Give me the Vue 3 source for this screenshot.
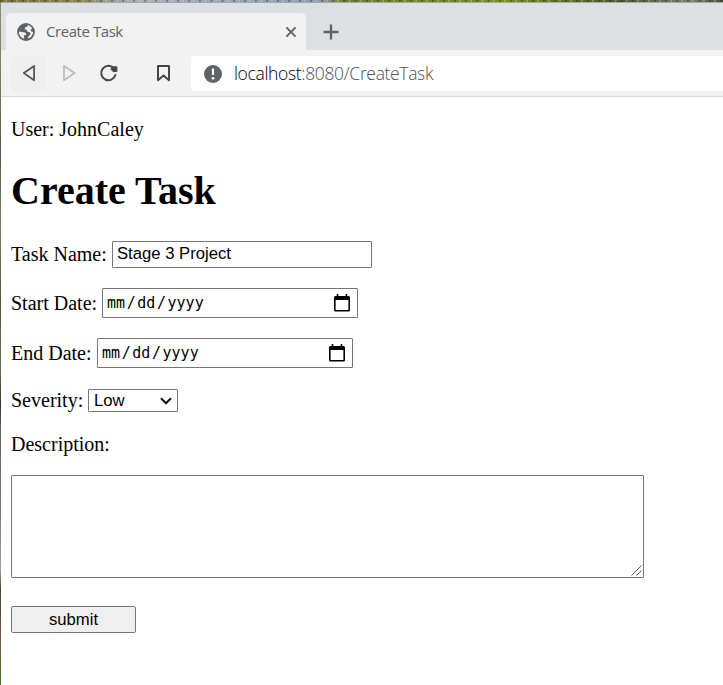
<script setup>
import { ref } from 'vue'

const taskName = ref('Stage 3 Project')
const dates = [
  { label: 'Start Date:', cls: 'start' },
  { label: 'End Date:', cls: 'end' },
]
</script>

<template>
  <div class="desktop">
    <div class="window">
      <div class="tabs">
        <div class="tab">
          <svg class="globe" width="18" height="18" viewBox="0 0 18 18">
            <circle cx="9" cy="9" r="8.9" fill="#5f6368" />
            <path d="M2 8.5 L6.5 9.2 C8.5 9.5 9.2 10.3 9.2 11.8 L7.2 12.3 L7 15.8 C3.8 14.8 1.7 12 2 8.5Z" fill="#f2f2f2" />
            <path d="M10.6 2.1 L10.4 3.8 L8 4.3 L7.8 6.2 L9.8 7 L10.4 8.8 L13 9.3 L13.6 11.2 L11.6 13.2 L10.5 15.7 C13.6 15 16 12.3 16 9 L14.4 8.6 L13.4 6.8 L15.2 5.8 C14.2 3.8 12.6 2.5 10.6 2.1Z" fill="#f2f2f2" />
          </svg>
          <span class="tab-title">Create Task</span>
          <svg class="close" width="12" height="12" viewBox="0 0 12 12">
            <path d="M1.4 1.4 10.6 10.6M10.6 1.4 1.4 10.6" stroke="#5f6368" stroke-width="2" />
          </svg>
        </div>
        <svg class="plus" width="16" height="16" viewBox="0 0 16 16">
          <path d="M8 .5V15.5M.5 8H15.5" stroke="#5f6368" stroke-width="2.3" />
        </svg>
      </div>
      <div class="toolbar">
        <div class="tool back">
          <svg width="35" height="35" viewBox="0 0 35 35" fill="none" stroke="#55585c" stroke-width="1.8" stroke-linejoin="round">
            <path d="M23.1 10V24.2L12.8 17.1Z" />
          </svg>
        </div>
        <div class="tool forward">
          <svg width="35" height="35" viewBox="0 0 35 35" fill="none" stroke="#bcbdbe" stroke-width="1.8" stroke-linejoin="round">
            <path d="M13 10V24.2L23.6 17.1Z" />
          </svg>
        </div>
        <div class="tool reload">
          <svg width="35" height="35" viewBox="0 0 35 35" fill="none">
            <path d="M22.8 12.2A7.2 7.2 0 1 0 24.4 19" stroke="#444648" stroke-width="2" stroke-linecap="round" />
            <path d="M21.2 10.9 25.9 10.8V15.4L22.3 15.7 19.9 13.2Z" fill="#444648" stroke="#444648" stroke-linejoin="round" />
          </svg>
        </div>
        <div class="tool bookmark">
          <svg width="35" height="35" viewBox="0 0 35 35" fill="none" stroke="#444648" stroke-width="2" stroke-linejoin="round">
            <path d="M12 10H23V24.2L17.5 19.6 12 24.2Z" />
          </svg>
        </div>
        <div class="address">
          <svg width="18" height="18" viewBox="0 0 18 18">
            <circle cx="9" cy="9" r="9" fill="#5f6368" />
            <path d="M9 3.5V10" stroke="#fff" stroke-width="2.2" />
            <circle cx="9" cy="13.3" r="1.4" fill="#fff" />
          </svg>
          <span class="url"><b>localhost</b>:8080/CreateTask</span>
        </div>
      </div>
      <main class="page">
        <p class="user">User: JohnCaley</p>
        <h1>Create Task</h1>
        <form @submit.prevent>
          <div class="row name">
            <label for="task">Task Name:</label>
            <input id="task" v-model="taskName" type="text" />
          </div>
          <div v-for="d in dates" :key="d.cls" class="row date" :class="d.cls">
            <label>{{ d.label }}</label>
            <div class="date-box">
              <span class="mask">mm<i>/</i>dd<i>/</i>yyyy</span>
              <svg width="16" height="18" viewBox="0 0 16 18">
                <path d="M2.7 0H4.3V2H11.7V0H13.3V2H14.5Q16 2 16 3.5V16Q16 17.5 14.5 17.5H1.5Q0 17.5 0 16V3.5Q0 2 1.5 2H2.7ZM1.6 6V16H14.4V6Z" fill="#000" fill-rule="evenodd" />
              </svg>
            </div>
          </div>
          <div class="row severity">
            <label>Severity:</label>
            <div class="select">
              <span>Low</span>
              <svg width="12" height="8" viewBox="0 0 12 8">
                <path d="M1 1.2 6 6.2 11 1.2" fill="none" stroke="#111" stroke-width="2.1" />
              </svg>
            </div>
          </div>
          <div class="row desc"><label for="description">Description:</label></div>
          <div class="area">
            <textarea id="description"></textarea>
            <svg class="grip" width="11" height="11" viewBox="0 0 11 11">
              <path d="M.5 10.5 10.5 .5M5.5 10.5 10.5 5.5" stroke="#555" stroke-width="1" />
            </svg>
          </div>
          <button type="submit">submit</button>
        </form>
      </main>
    </div>
  </div>
</template>

<style>
body {
  margin: 0;
  overflow: hidden;
}
</style>

<style scoped>
* {
  box-sizing: border-box;
}
.desktop {
  width: 723px;
  height: 685px;
  padding: 2px 0 0 1px;
  background:
    repeating-linear-gradient(97deg, rgba(20, 24, 12, 0.3) 0 2px, transparent 2px 5px, rgba(210, 215, 200, 0.3) 5px 7px, transparent 7px 11px) 0 0 / 100% 2px no-repeat,
    linear-gradient(90deg, #75713d 0, #85824f 80px, #9a9c91 105px, #a9b1bc 140px, #929dae 320px, #6d7936 345px, #7b8b23 500px, #4e5531 620px, #777b73 690px, #4b513c) 0 0 / 100% 2px no-repeat,
    linear-gradient(180deg, #908b6d 0, #77785f 90px, #56594a 150px, #7b8165 230px, #55583c 300px, #6d7157 370px, #33352a 405px, #62646b 430px, #777980 510px, #a0a198 570px, #4a4333 590px, #765e4d 645px, #536d2c 665px);
}
.window {
  height: 683px;
  border-top: 1px solid #a5a9ab;
  background: #fff;
}
.tabs {
  display: flex;
  height: 47px;
  padding: 10px 0 0 5px;
  background: #dce0e3;
}
.tab {
  display: flex;
  align-items: center;
  width: 300px;
  height: 37px;
  padding: 0 9px 0 11px;
  border-radius: 5px 5px 0 0;
  background: #f2f2f2;
}
.tab-title {
  flex: 1;
  margin-left: 11px;
  padding-bottom: 2px;
  font: 15px/20px "Open Sans", sans-serif;
  letter-spacing: -0.44px;
  color: #5f6368;
}
.plus {
  margin: 11px 0 0 17px;
}
.toolbar {
  display: flex;
  align-items: flex-start;
  height: 47px;
  padding: 6px 0 0 10px;
  border-bottom: 1px solid #d5d8dc;
  background: #f2f2f2;
}
.tool {
  width: 35px;
  height: 35px;
  border-radius: 4px;
}
.tool svg,
.address svg {
  display: block;
}
.back {
  background: #eeeeee;
}
.forward {
  margin-left: 5px;
}
.reload {
  margin-left: 5px;
}
.bookmark {
  margin-left: 20px;
}
.address {
  display: flex;
  flex: 1;
  align-items: center;
  height: 35px;
  margin-left: 10px;
  padding-left: 13px;
  border-radius: 4px 0 0 4px;
  background: #fff;
}
.url {
  margin-left: 12px;
  padding-bottom: 1px;
  font: 300 17.5px/24px "Open Sans", sans-serif;
  letter-spacing: -0.34px;
  color: #4c5055;
  white-space: nowrap;
}
.url b {
  font-weight: inherit;
  color: #000;
}
.page {
  padding: 21px 0 0 10px;
  font: 20px/23px "Liberation Serif", serif;
  color: #000;
}
.user {
  height: 23px;
  margin: 0;
}
h1 {
  height: 46px;
  margin: 27px 0;
  font: bold 40px/46px "Liberation Serif", serif;
}
.row {
  display: flex;
  align-items: center;
}
.row label {
  flex: none;
  white-space: nowrap;
}
.name label {
  width: 101px;
}
.start label {
  width: 91px;
}
.end label {
  width: 86px;
}
.severity label {
  width: 77px;
}
input,
.date-box,
.select {
  border: 1px solid #767676;
  border-radius: 1px;
  background: #fff;
}
input {
  width: 260px;
  height: 27px;
  padding: 0 4px 2px;
  font: 16.67px "Liberation Sans", sans-serif;
  color: #000;
  outline: none;
}
.date {
  margin-top: 20px;
}
.date-box {
  display: flex;
  align-items: center;
  justify-content: space-between;
  width: 256px;
  height: 30px;
  padding: 0 7px 0 4px;
}
.mask {
  font: 15px/20px "DejaVu Sans Mono", monospace;
}
.mask i {
  padding: 0 1.6px;
  font-style: normal;
}
.severity {
  margin-top: 21px;
}
.select {
  display: flex;
  align-items: center;
  justify-content: space-between;
  width: 90px;
  height: 23px;
  padding: 0 5px;
  font: 16.67px/20px "Liberation Sans", sans-serif;
}
.desc {
  margin-top: 21px;
}
.area {
  position: relative;
  width: 633px;
  height: 103px;
  margin-top: 19px;
}
textarea {
  display: block;
  width: 633px;
  height: 103px;
  border: 1px solid #767676;
  border-radius: 1px;
  resize: none;
  outline: none;
}
.grip {
  position: absolute;
  right: 2px;
  bottom: 2px;
}
button {
  display: block;
  width: 125px;
  height: 27px;
  margin-top: 28px;
  padding: 0;
  border: 1px solid #767676;
  border-radius: 2px;
  background: #efefef;
  font: 16.67px "Liberation Sans", sans-serif;
  color: #000;
}
</style>
